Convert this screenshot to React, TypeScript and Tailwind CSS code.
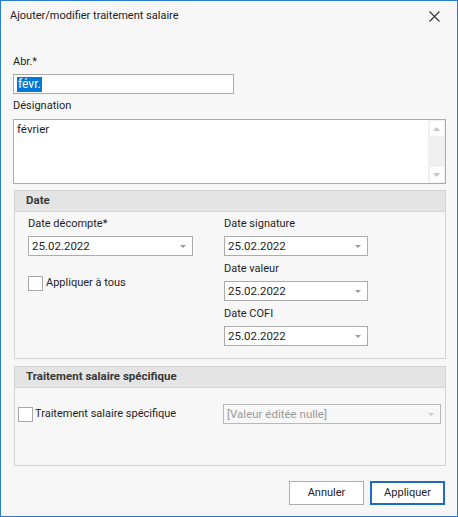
import React from "react";

function Arrow({ color = "#9a9a9a" }: { color?: string }) {
  return (
    <svg width="6" height="3" viewBox="0 0 6 3" className="shrink-0">
      <path d="M0 0 H6 L3 3 Z" fill={color} />
    </svg>
  );
}

function Combo({ value, w, disabled = false }: { value: string; w: string; disabled?: boolean }) {
  return (
    <div
      className={
        "h-[20px] border flex items-center justify-between pl-[3px] pr-[6px] " +
        w +
        (disabled ? " bg-[#f7f7f7] border-[#b9b9b9] text-[#9a9a9a]" : " bg-white border-[#ababab] text-[#1e1e1e]")
      }
    >
      <span className="leading-[16px] text-[11.5px]">{value}</span>
      <Arrow color={disabled ? "#cccccc" : "#9a9a9a"} />
    </div>
  );
}

function Check() {
  return <div className="w-[15px] h-[15px] border border-[#a8a8a8] bg-white shrink-0" />;
}

function Label({ children, className = "" }: { children: React.ReactNode; className?: string }) {
  return <div className={"h-[16px] leading-[16px] text-[#1e1e1e] " + className}>{children}</div>;
}

function GroupHeader({ title }: { title: string }) {
  return (
    <div className="h-[21px] bg-[#e4e4e4] border-b border-[#d6d6d6] flex items-center pl-[11px] font-bold text-[11.5px] text-[#383838]">
      {title}
    </div>
  );
}

export default function App() {
  return (
    <div
      className="w-[458px] h-[517px] bg-[#f7f7f7] border border-[#2b7ad3] flex flex-col text-[11px] text-[#1e1e1e]"
      style={{ fontFamily: "Roboto, 'Noto Sans', sans-serif" }}
    >
      {/* Title bar */}
      <div className="h-[31px] flex items-center justify-between pl-[9px] pr-[17px] shrink-0">
        <span className="text-[#222]">Ajouter/modifier traitement salaire</span>
        <svg width="11" height="11" viewBox="0 0 11 11">
          <path d="M0.5 0.5 L10.5 10.5 M10.5 0.5 L0.5 10.5" stroke="#333" strokeWidth="1.1" />
        </svg>
      </div>

      <div className="flex flex-col px-[12px]">
        <Label className="mt-[22px]">Abr.*</Label>
        <div className="mt-[4px] h-[20px] w-[221px] border border-[#ababab] bg-white flex items-center pl-[3px]">
          <span className="bg-[#0078d7] text-white leading-[15px] px-[1px] text-[12px]">févr.</span>
        </div>

        <Label className="mt-[4px]">Désignation</Label>
        <div className="mt-[5px] h-[65px] w-[433px] border border-[#ababab] bg-white flex">
          <div className="flex-1 pl-[3px] pt-[1px] leading-[16px] text-[11.5px]">février</div>
          <div className="w-[17px] bg-[#f0f0f0] flex flex-col justify-between items-center py-[1px]">
            <div className="w-[14px] h-[15px] bg-white flex items-center justify-center">
              <svg width="7" height="4" viewBox="0 0 7 4">
                <path d="M0 4 H7 L3.5 0 Z" fill="#c6c6c6" />
              </svg>
            </div>
            <div className="w-[14px] h-[15px] bg-white flex items-center justify-center">
              <svg width="7" height="4" viewBox="0 0 7 4">
                <path d="M0 0 H7 L3.5 4 Z" fill="#c6c6c6" />
              </svg>
            </div>
          </div>
        </div>

        {/* Group Date */}
        <div className="mt-[6px] ml-[1px] w-[432px] h-[169px] border border-[#d4d4d4] flex flex-col">
          <GroupHeader title="Date" />
          <div className="flex pl-[13px]">
            <div className="w-[196px] flex flex-col">
              <Label className="mt-[4px]">Date décompte*</Label>
              <div className="mt-[4px]">
                <Combo value="25.02.2022" w="w-[165px]" />
              </div>
              <div className="mt-[19px] flex items-center gap-[3px]">
                <Check />
                <span className="leading-[16px]">Appliquer à tous</span>
              </div>
            </div>
            <div className="flex flex-col">
              <Label className="mt-[4px]">Date signature</Label>
              <div className="mt-[4px]">
                <Combo value="25.02.2022" w="w-[144px]" />
              </div>
              <Label className="mt-[5px]">Date valeur</Label>
              <div className="mt-[4px]">
                <Combo value="25.02.2022" w="w-[144px]" />
              </div>
              <Label className="mt-[5px]">Date COFI</Label>
              <div className="mt-[4px]">
                <Combo value="25.02.2022" w="w-[144px]" />
              </div>
            </div>
          </div>
        </div>

        {/* Group Traitement */}
        <div className="mt-[7px] ml-[1px] w-[432px] h-[100px] border border-[#d4d4d4] flex flex-col">
          <GroupHeader title="Traitement salaire spécifique" />
          <div className="flex items-center pl-[3px] mt-[16px]">
            <div className="w-[205px] flex items-center gap-[2px]">
              <Check />
              <span className="leading-[16px]">Traitement salaire spécifique</span>
            </div>
            <Combo value="[Valeur éditée nulle]" w="w-[218px]" disabled />
          </div>
        </div>

        {/* Buttons */}
        <div className="mt-[15px] flex justify-end gap-[6px]">
          <button className="w-[75px] h-[24px] border border-[#adadad] bg-white text-[#222] leading-[16px]">
            Annuler
          </button>
          <button className="w-[75px] h-[24px] border-2 border-[#1d6bc6] bg-white text-[#222] leading-[16px]">
            Appliquer
          </button>
        </div>
      </div>
    </div>
  );
}
